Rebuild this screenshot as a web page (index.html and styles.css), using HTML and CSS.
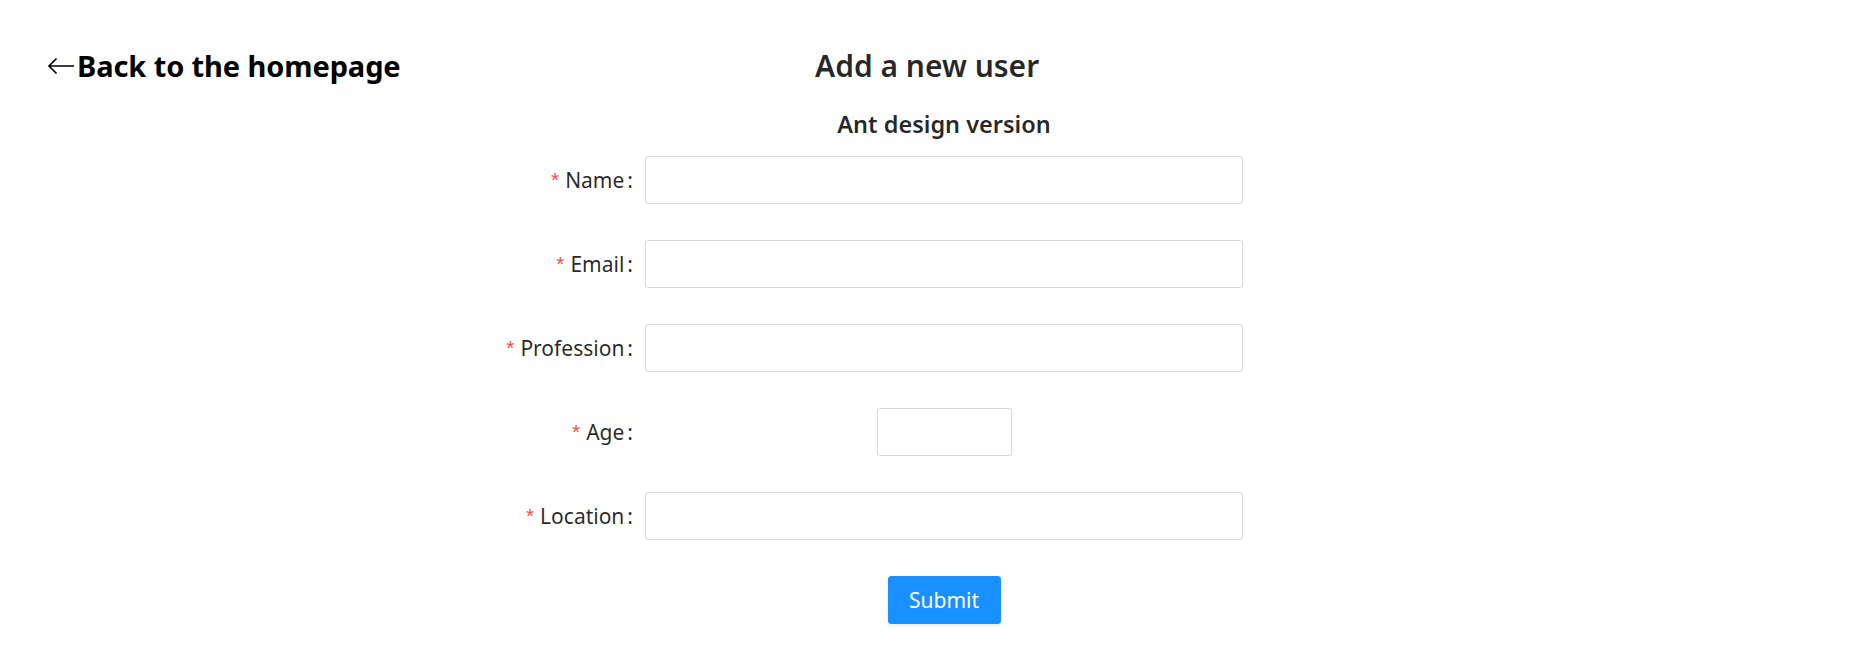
FILE: index.html
```html
<!DOCTYPE html>
<html lang="en">
<head>
<meta charset="utf-8">
<title>Add a new user</title>
<link rel="stylesheet" href="styles.css">
</head>
<body>
<div class="page">
  <header class="top">
    <a class="back" href="#"><svg class="arrow" width="28" height="18" viewBox="0 0 28 18" aria-hidden="true"><path d="M27 9H2M9.5 1.5L2 9l7.5 7.5" fill="none" stroke="#000" stroke-width="1.7"/></svg>Back to the homepage</a>
    <h1 class="title">Add a new user</h1>
  </header>
  <form class="form">
    <h2 class="subtitle">Ant design version</h2>
    <div class="row">
      <label class="label"><span class="req">*</span>Name<span class="colon">:</span></label>
      <div class="control"><input class="input" type="text"></div>
    </div>
    <div class="row">
      <label class="label"><span class="req">*</span>Email<span class="colon">:</span></label>
      <div class="control"><input class="input" type="text"></div>
    </div>
    <div class="row">
      <label class="label"><span class="req">*</span>Profession<span class="colon">:</span></label>
      <div class="control"><input class="input" type="text"></div>
    </div>
    <div class="row">
      <label class="label"><span class="req">*</span>Age<span class="colon">:</span></label>
      <div class="control control-center"><input class="input input-age" type="text"></div>
    </div>
    <div class="row">
      <label class="label"><span class="req">*</span>Location<span class="colon">:</span></label>
      <div class="control"><input class="input" type="text"></div>
    </div>
    <div class="row">
      <div class="label"></div>
      <div class="control control-center"><button class="btn" type="button">Submit</button></div>
    </div>
  </form>
</div>
</body>
</html>
```
FILE: styles.css
```css
* { box-sizing: border-box; }
html, body { margin: 0; padding: 0; background: #fff; }
body {
  font-family: "Segoe UI", "Noto Sans", "Open Sans", sans-serif;
  color: rgba(0,0,0,0.85);
}
.page { padding-top: 43px; }
.top {
  display: flex;
  align-items: flex-end;
}
.back {
  flex: none;
  display: flex;
  align-items: center;
  width: 815px;
  padding-left: 47px;
  font-size: 29px;
  font-weight: 700;
  line-height: 45px;
  color: #000;
  text-decoration: none;
  letter-spacing: -0.1px;
}
.arrow { flex: none; margin-right: 2px; margin-top: 1px; }
.title {
  margin: 0;
  font-size: 30px;
  font-weight: 600;
  line-height: 45px;
  color: rgba(0,0,0,0.85);
}
.form {
  display: grid;
  grid-template-columns: 299px 598px;
  margin-left: 346px;
  margin-top: 18px;
}
.subtitle {
  grid-column: 2;
  margin: 0 0 14px;
  text-align: center;
  font-size: 23.5px;
  font-weight: 600;
  line-height: 36px;
}
.row { display: contents; }
.label, .control {
  height: 48px;
  margin-bottom: 36px;
  display: flex;
  align-items: center;
}
.label {
  justify-content: flex-end;
  font-size: 21px;
  white-space: nowrap;
}
.req {
  color: #ff4d4f;
  margin-right: 6px;
  font-family: "Liberation Sans", sans-serif;
  font-size: 21px;
}
.colon { margin: 0 12px 0 3px; }
.control-center { justify-content: center; }
.input {
  width: 100%;
  height: 48px;
  border: 1.5px solid #d9d9d9;
  border-radius: 3px;
  padding: 6px 16px;
  font: inherit;
  font-size: 21px;
  outline: none;
}
.input-age { width: 135px; }
.btn {
  width: 113px;
  height: 48px;
  background: #1890ff;
  border: 1.5px solid #1890ff;
  border-radius: 3px;
  color: #fff;
  font: inherit;
  font-size: 21px;
  box-shadow: 0 3px 0 rgba(0,0,0,0.045);
}
```
